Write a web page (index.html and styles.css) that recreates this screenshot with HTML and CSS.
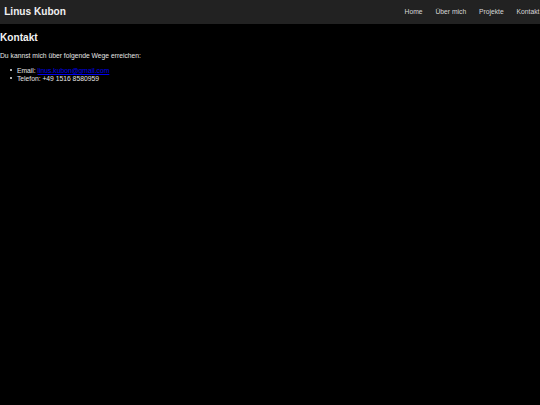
FILE: index.html
```html
<!DOCTYPE html>
<html lang="de">
<head>
<meta charset="utf-8">
<title>Kontakt - Linus Kubon</title>
<link rel="stylesheet" href="styles.css">
</head>
<body>
<header class="site-header">
  <h1 class="site-title">Linus Kubon</h1>
  <nav class="site-nav">
    <a href="#">Home</a>
    <a href="#">Über mich</a>
    <a href="#">Projekte</a>
    <a href="#">Kontakt</a>
  </nav>
</header>
<main class="content">
  <h2 class="page-title">Kontakt</h2>
  <p class="intro">Du kannst mich über folgende Wege erreichen:</p>
  <ul class="contact-list">
    <li>Email: <a class="mail" href="#">linus.kubon@gmail.com</a></li>
    <li>Telefon: +49 1516 8580959</li>
  </ul>
</main>
</body>
</html>
```

FILE: styles.css
```css
html, body {
  margin: 0;
  padding: 0;
  background: #000;
  overflow: hidden;
}

body {
  font-family: "Liberation Sans", Arial, sans-serif;
  font-size: 6.75px;
  line-height: 7.76px;
  color: #e6e6e6;
}

.site-header {
  display: flex;
  justify-content: space-between;
  align-items: center;
  background: #222;
  padding: 6.18px 0.6px 6.18px 4.2px;
  box-shadow: 0 0.8px 1.6px rgba(0, 0, 0, 0.6);
}

.site-title {
  margin: 0;
  font-size: 10.125px;
  line-height: 11.64px;
  font-weight: bold;
  color: #f0f0f0;
}

.site-nav {
  display: flex;
  gap: 12.8px;
}

.site-nav a {
  color: #d8d8d8;
  text-decoration: none;
}

.page-title {
  margin: 8.4px 0;
  font-size: 10.125px;
  line-height: 11.64px;
  font-weight: bold;
  color: #f2f2f2;
}

.intro {
  margin: 6.75px 0;
}

.contact-list {
  margin: 6.75px 0;
  padding-left: 16.9px;
  list-style: none;
}

.contact-list li::before {
  content: "";
  display: inline-block;
  width: 2.2px;
  height: 2.2px;
  border-radius: 50%;
  background: #e6e6e6;
  margin-left: -6.7px;
  margin-right: 4.5px;
  vertical-align: 1.9px;
}

.mail {
  color: #0000ee;
}
```
